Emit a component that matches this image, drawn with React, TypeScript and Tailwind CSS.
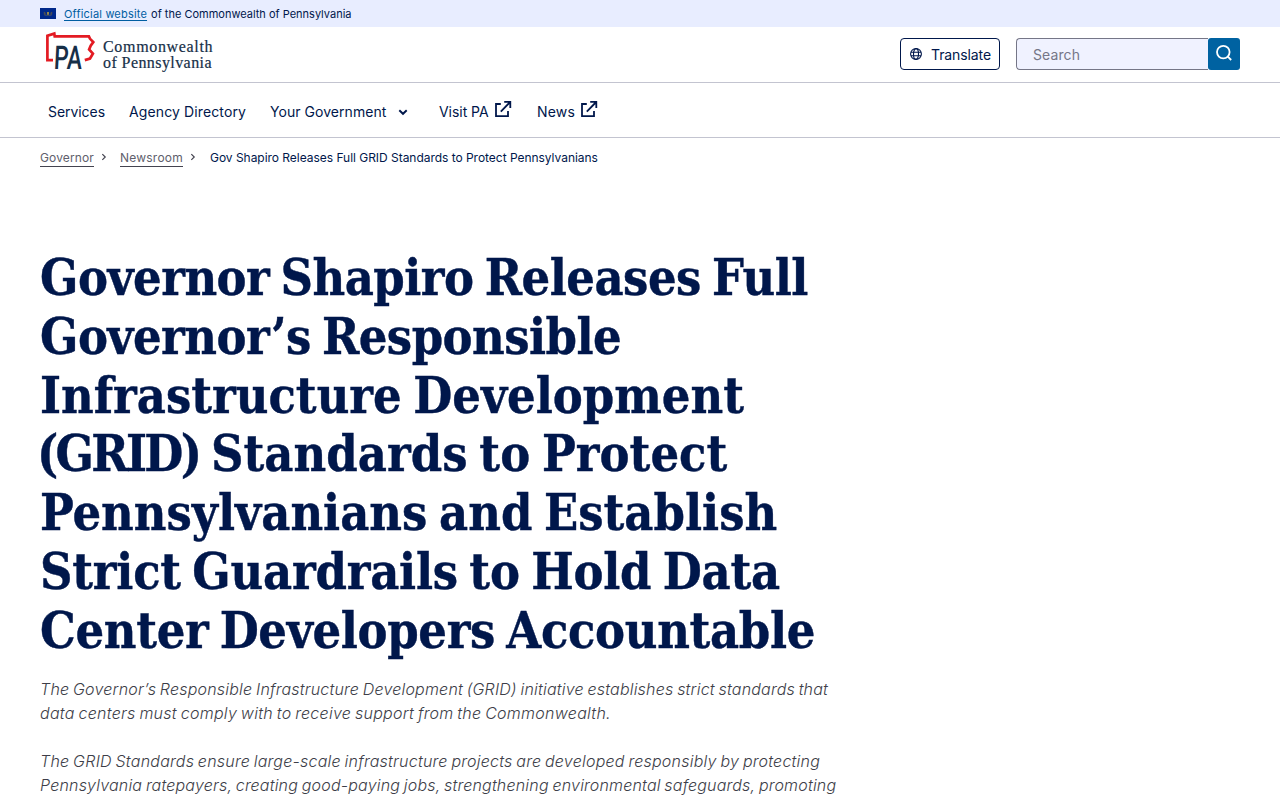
const Chevron = ({ d, size, width, className }: { d: string; size: number; width: number; className: string }) => (
  <svg width={size} height={size} viewBox="0 0 12 12" fill="none" stroke="currentColor" strokeWidth={width} className={className}>
    <path d={d} />
  </svg>
);

const External = () => (
  <svg width="18" height="18" viewBox="0 0 18 18" fill="none" stroke="currentColor" strokeWidth="1.8" className="shrink-0">
    <path d="M6.8 4H2v12.2h12V11M10.2 1.9h6.1V8M16.2 2 6.8 11.7" />
  </svg>
);

const Flag = () => (
  <svg width="16" height="11" viewBox="0 0 16 11" className="mr-2 shrink-0">
    <rect width="16" height="11" fill="#00288a" />
    <path d="M3.6 4.2 5 3.8l1 2.7-2 .6zM12.4 4.2 11 3.8l-1 2.7 2 .6z" fill="#4a4d55" />
    <path d="M7 4h2v2.5L8 7.2 7 6.5z" fill="#94884a" />
    <path d="M4.5 7.3h7" stroke="#4b5660" strokeWidth=".8" />
  </svg>
);

const Logo = () => (
  <div className="flex h-[55px] items-start">
    <svg width="58" height="55" viewBox="0 0 58 55" className="ml-[2px] shrink-0">
      <path
        d="M11 33.2H5.4V8.8l6.9-2.2.4 2.8h34.2l1 2.2 3.4 3.5-2.6 3.6-1.6 3.8 3.8 4.2-2.9 4.8-5.2 1.6"
        fill="none"
        stroke="#e31b23"
        strokeWidth="2.7"
      />
      <text
        transform="translate(11.6 42) skewX(-3) scale(.7 1)"
        fontFamily="Roboto, sans-serif"
        fontWeight="500"
        fontSize="32.6"
        fill="#162f48"
      >
        PA
      </text>
    </svg>
    <div className="ml-[3px] mt-[12px] flex flex-col whitespace-nowrap font-['Liberation_Serif',serif] text-[16px] leading-4 text-[#162f48] [-webkit-text-stroke:.2px_#162f48]">
      <span className="tracking-[.67px]">Commonwealth</span>
      <span className="tracking-[.42px]">of Pennsylvania</span>
    </div>
  </div>
);

export default function App() {
  return (
    <div className="h-[800px] overflow-hidden bg-white font-['Inter',sans-serif] text-[#00174b]">
      <div className="flex h-[27px] items-center bg-[#e8edff] pl-10 text-[11px] leading-4">
        <Flag />
        <a className="tracking-[.19px] text-[#005ea2] underline underline-offset-2">Official website</a>
        <span className="ml-1">of the Commonwealth of Pennsylvania</span>
      </div>

      <header className="flex h-[56px] items-start justify-between border-b border-[#c3c4d0] px-10">
        <Logo />
        <div className="mt-[11px] flex">
          <button className="flex h-8 w-[100px] items-center rounded-[4px] border border-[#00174b] pl-[9px] text-[14px]">
            <svg width="12" height="12" viewBox="0 0 12 12" fill="none" stroke="currentColor" strokeWidth="1.1" className="mr-[9px] shrink-0">
              <circle cx="6" cy="6" r="5.4" />
              <ellipse cx="6" cy="6" rx="2.5" ry="5.4" />
              <path d="M1 4.2h10M1 7.8h10" />
            </svg>
            <span className="tracking-[-.1px]">Translate</span>
          </button>
          <div className="ml-4 flex h-8 w-56">
            <div className="flex flex-1 items-center rounded-l-[4px] border border-r-0 border-[#757687] bg-[#f0f2ff] pl-4 text-[14px] tracking-[.09px] text-[#757687]">
              Search
            </div>
            <button className="flex w-8 justify-center rounded-[3px] bg-[#0062a1] pt-[6px] text-white">
              <svg width="18" height="18" viewBox="0 0 18 18" fill="none" stroke="currentColor" strokeWidth="1.8">
                <circle cx="8.3" cy="8.1" r="6.3" />
                <path d="m12.8 12.6 3.4 3.4" />
              </svg>
            </button>
          </div>
        </div>
      </header>

      <nav className="flex h-[55px] items-center border-b border-[#c3c4d0] pl-12 pt-[3px] text-[14px] leading-5 whitespace-nowrap">
        <a className="mr-6 w-[57px] tracking-[-.06px]">Services</a>
        <a className="mr-6 w-[117px] tracking-[.12px]">Agency Directory</a>
        <a className="w-[117px] tracking-[.05px]">Your Government</a>
        <Chevron d="m2.3 4.2 3.7 3.6 3.7-3.6" size={12} width={1.9} className="ml-[10px] mr-[30px] shrink-0" />
        <a className="w-[50px] tracking-[-.05px]">Visit PA</a>
        <span className="-mt-[6px] ml-[5px] mr-[25px]"><External /></span>
        <a className="w-[38px] tracking-[.17px]">News</a>
        <span className="-mt-[6px] ml-[5px]"><External /></span>
      </nav>

      <div className="flex h-[39px] items-center pl-10 text-[12px] leading-4 whitespace-nowrap">
        <a className="mt-[1px] w-[54px] border-b border-[#43434f] tracking-[.13px] text-[#60606c]">Governor</a>
        <Chevron d="m4 2.5 3.5 3.5L4 9.5" size={10} width={1.4} className="mb-[2px] ml-[5px] mr-[11px] shrink-0 text-[#43434f]" />
        <a className="mt-[1px] w-[63px] border-b border-[#43434f] tracking-[.22px] text-[#60606c]">Newsroom</a>
        <Chevron d="m4 2.5 3.5 3.5L4 9.5" size={10} width={1.4} className="mb-[2px] ml-[5px] mr-[12px] shrink-0 text-[#43434f]" />
        <span className="tracking-[-.03px]">Gov Shapiro Releases Full GRID Standards to Protect Pennsylvanians</span>
      </div>

      <main className="pl-10 pt-[72px] whitespace-nowrap">
        <h1 className="flex flex-col font-['DejaVu_Serif_Condensed','DejaVu_Serif',serif] text-[50px] font-bold leading-[58.8px] [-webkit-text-stroke:.4px_#00174b] [font-stretch:condensed] [word-spacing:-4px]">
          <span className="tracking-[-.5px]">Governor Shapiro Releases Full</span>
          <span className="tracking-[-.53px]">Governor’s Responsible</span>
          <span>Infrastructure Development</span>
          <span className="-ml-[3px] tracking-[.05px]"><span className="tracking-[-2.7px]">(GRID)</span> Standards to Protect</span>
          <span>Pennsylvanians and Establish</span>
          <span className="tracking-[-.22px]">Strict Guardrails to Hold Data</span>
          <span className="tracking-[-.32px]">Center Developers Accountable</span>
        </h1>
        <div className="mt-4 text-[16px] font-light italic leading-6 text-[#3d3e48] [word-spacing:-1px]">
          <p className="mb-6 flex flex-col">
            <span className="tracking-[.2px]">The Governor’s Responsible Infrastructure Development (GRID) initiative establishes strict standards that</span>
            <span className="tracking-[.276px]">data centers must comply with to receive support from the Commonwealth.</span>
          </p>
          <p className="flex flex-col">
            <span className="tracking-[.234px]">The GRID Standards ensure large-scale infrastructure projects are developed responsibly by protecting</span>
            <span className="tracking-[.19px]">Pennsylvania ratepayers, creating good-paying jobs, strengthening environmental safeguards, promoting</span>
          </p>
        </div>
      </main>
    </div>
  );
}
